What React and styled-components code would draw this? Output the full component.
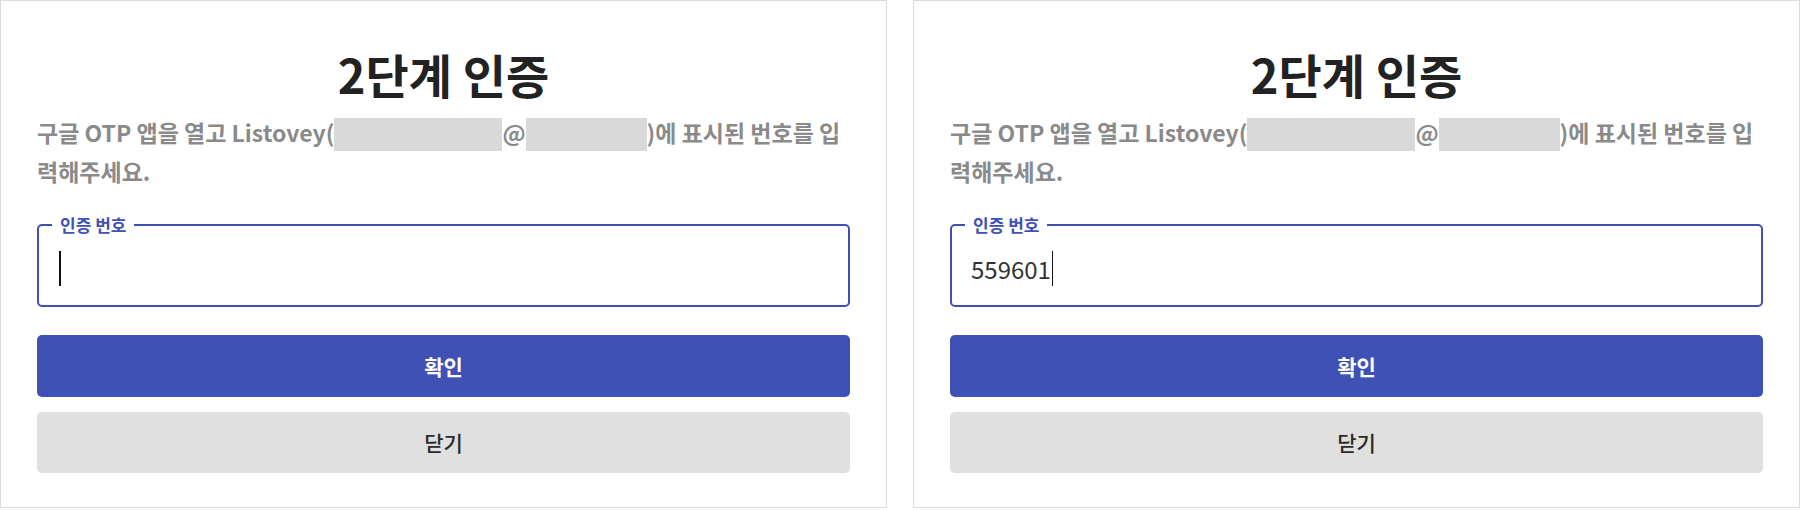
import React from 'react';
import styled, { createGlobalStyle } from 'styled-components';

const GlobalStyle = createGlobalStyle`
  html, body {
    margin: 0;
    padding: 0;
    background: #ffffff;
  }
  body {
    font-family: 'Noto Sans CJK KR', 'Noto Sans', sans-serif;
  }
`;

const Page = styled.div`
  display: flex;
  gap: 26px;
  width: 1800px;
`;

const Panel = styled.div`
  width: 887px;
  height: 508px;
  box-sizing: border-box;
  border: 1px solid #dcdcdc;
  background: #fff;
  padding: 46px 36px 34px;
  display: flex;
  flex-direction: column;
`;

const Title = styled.h1`
  margin: 0;
  font-size: 47px;
  line-height: 54px;
  font-weight: 700;
  color: #222;
  text-align: center;
`;

const Description = styled.p`
  margin: 12px 0 0;
  font-size: 23px;
  line-height: 39px;
  font-weight: 700;
  color: #8a8a8a;
`;

const Redacted = styled.span`
  display: inline-block;
  width: ${props => props.w}px;
  height: 33px;
  background: #d9d9d9;
  vertical-align: -9px;
`;

const Field = styled.fieldset`
  margin: 25px 0 0;
  padding: 0 11px;
  border: 2px solid #3f51b5;
  border-radius: 5px;
  min-width: 0;
`;

const Legend = styled.legend`
  padding: 0 8px;
  margin-left: 2px;
  font-size: 17px;
  line-height: 17px;
  font-weight: 700;
  color: #3f51b5;
`;

const InputBox = styled.div`
  height: 74px;
  padding: 0 8px;
  display: flex;
  align-items: center;
  font-size: 24px;
  color: #333;
  margin-top: -2px;
`;

const Caret = styled.span`
  display: inline-block;
  width: 1.5px;
  height: 35px;
  background: #111;
  margin-left: 1px;
`;

const Button = styled.button`
  width: 100%;
  height: 62px;
  border: none;
  border-radius: 5px;
  font-family: 'Noto Sans CJK KR', 'Noto Sans', sans-serif;
  font-size: 21px;
  background: ${props => (props.primary ? '#3f51b5' : '#e0e0e0')};
  color: ${props => (props.primary ? '#ffffff' : '#2a2a2a')};
  font-weight: ${props => (props.primary ? 700 : 500)};
  margin-top: ${props => (props.primary ? '28px' : '15px')};
  cursor: pointer;
`;

function OtpPanel({ value }) {
  return (
    <Panel>
      <Title>2단계 인증</Title>
      <Description>
        구글 OTP 앱을 열고 Listovey(<Redacted w={168} />@<Redacted w={121} />)에 표시된 번호를 입력해주세요.
      </Description>
      <Field>
        <Legend>인증 번호</Legend>
        <InputBox>
          {value}
          <Caret />
        </InputBox>
      </Field>
      <Button primary>확인</Button>
      <Button>닫기</Button>
    </Panel>
  );
}

export default function App() {
  return (
    <>
      <GlobalStyle />
      <Page>
        <OtpPanel value="" />
        <OtpPanel value="559601" />
      </Page>
    </>
  );
}
